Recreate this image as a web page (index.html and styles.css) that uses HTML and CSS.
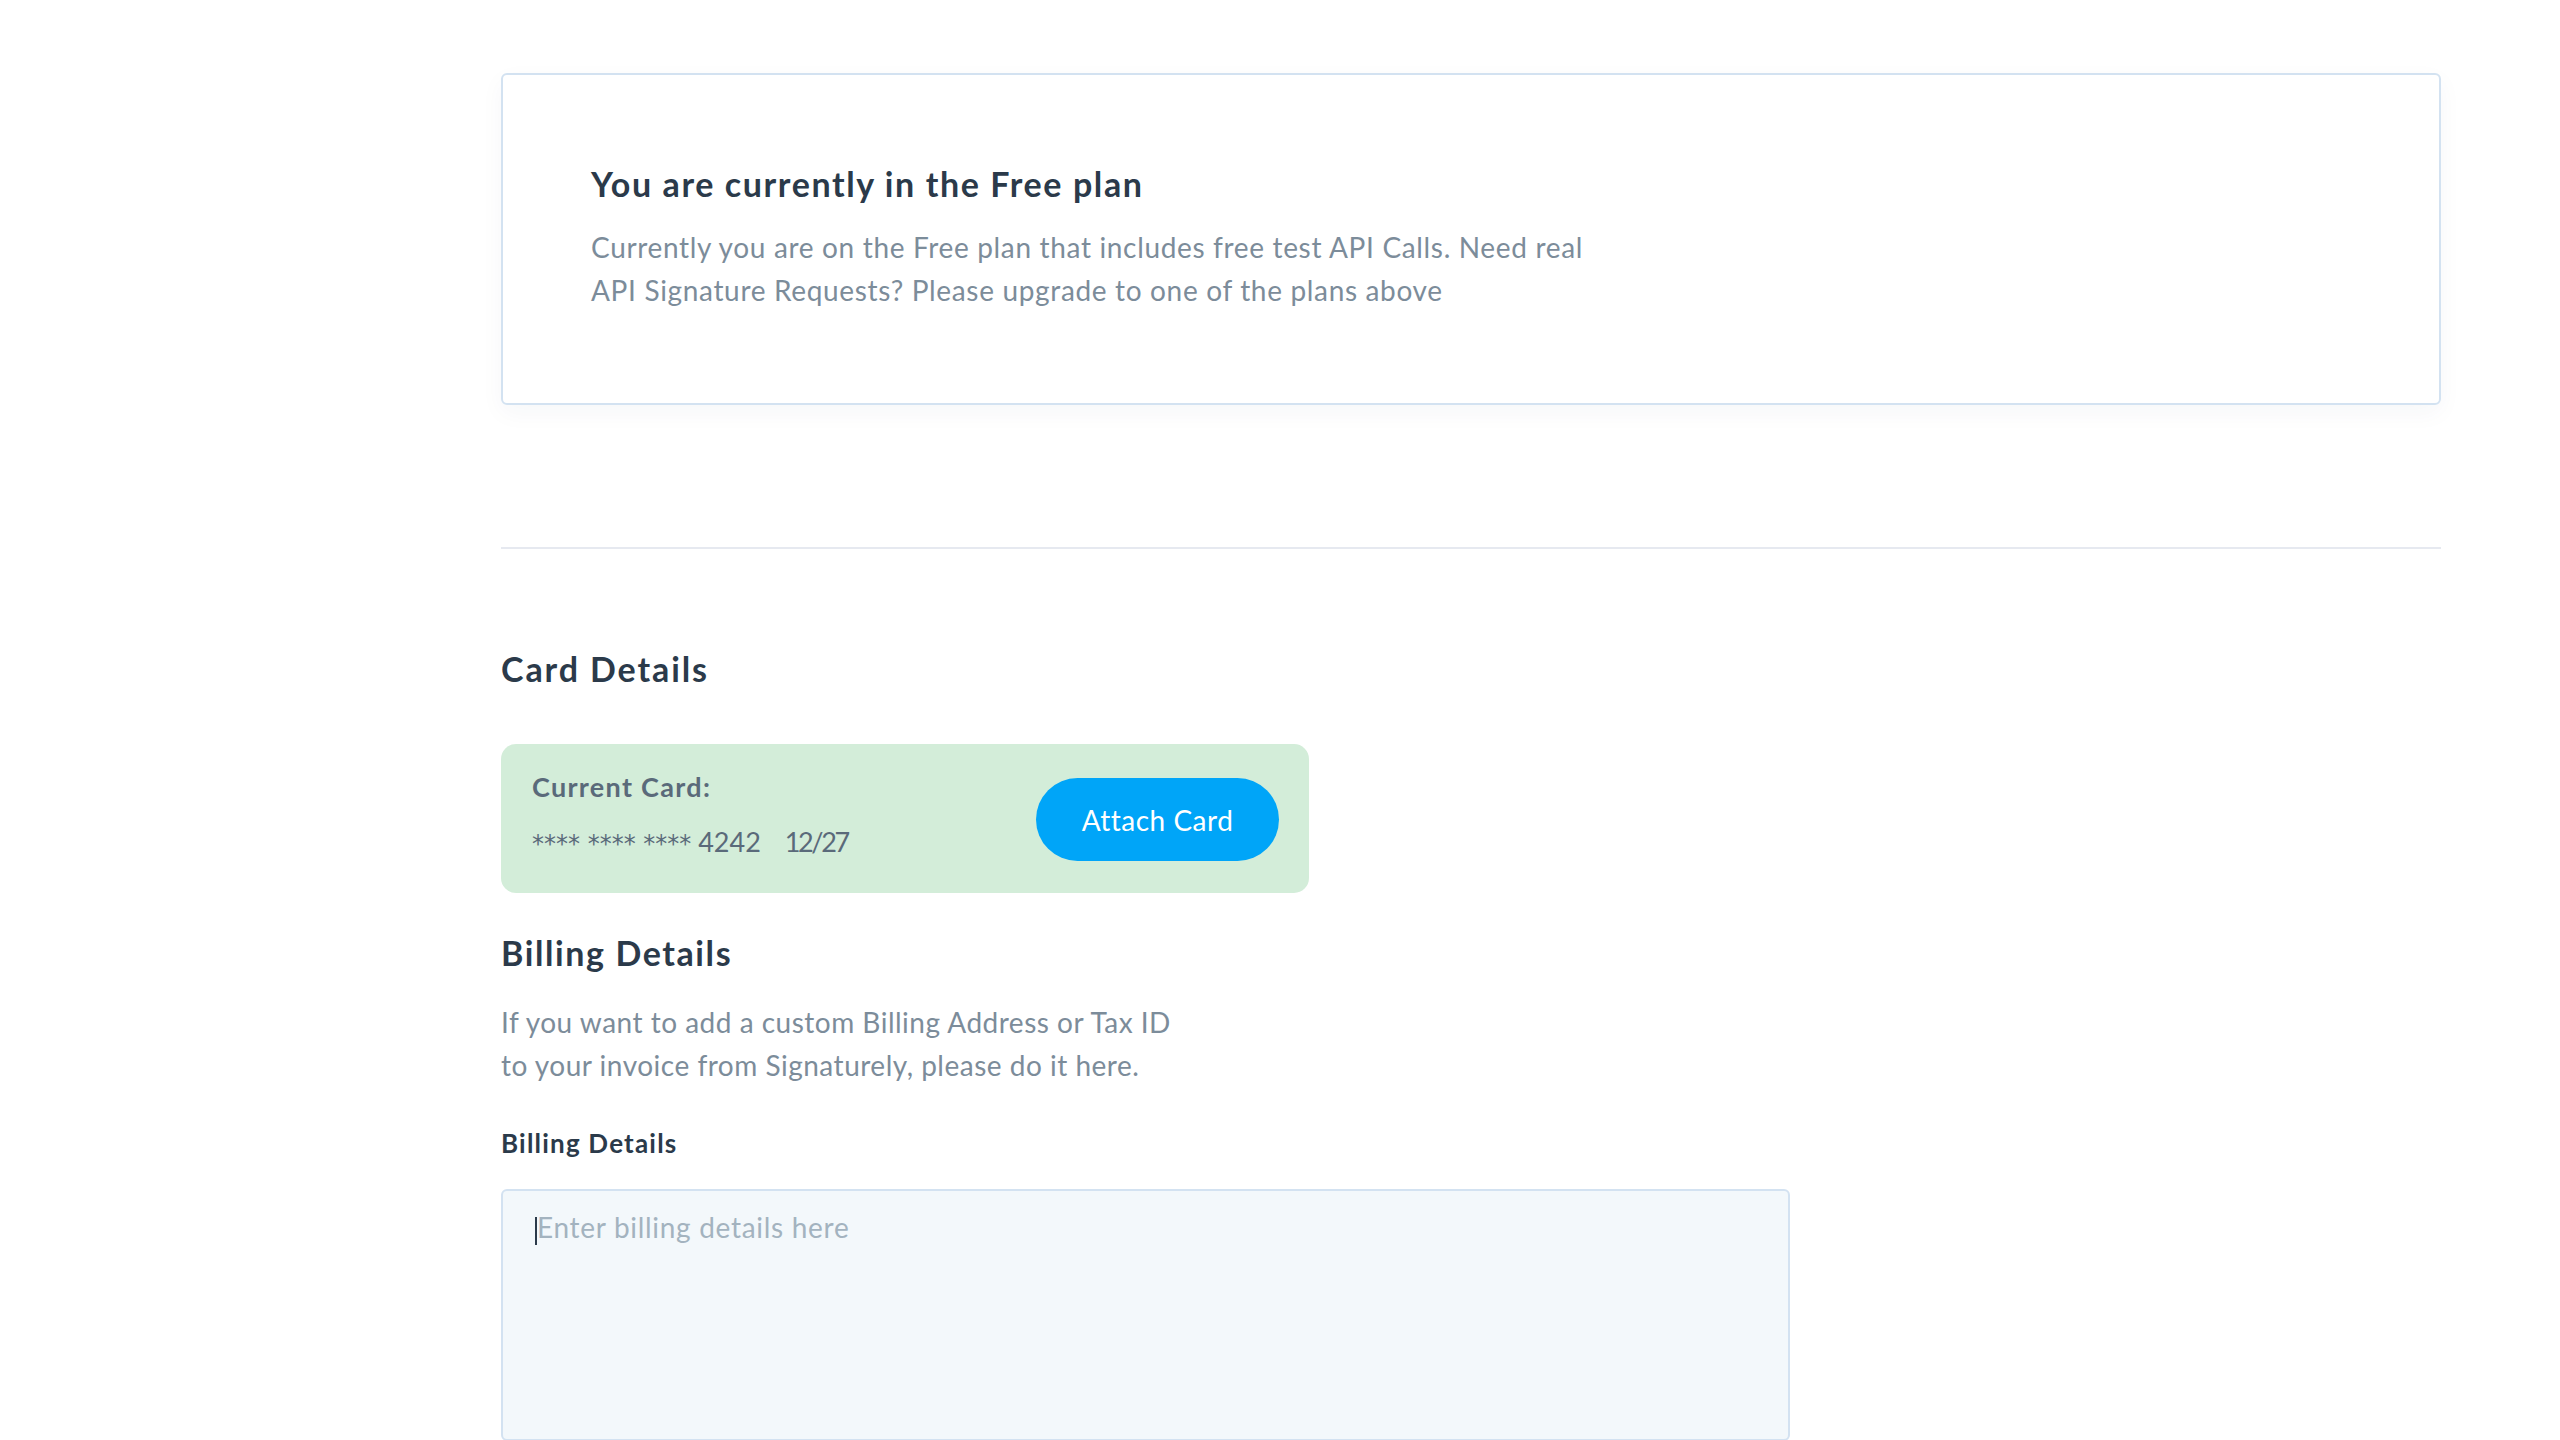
FILE: index.html
```html
<!DOCTYPE html>
<html lang="en">
<head>
<meta charset="utf-8">
<title>Billing</title>
<link rel="stylesheet" href="styles.css">
</head>
<body>
<main class="page">
  <section class="plan-box">
    <h2 class="plan-title">You are currently in the Free plan</h2>
    <p class="plan-text">Currently you are on the Free plan that includes free test API Calls. Need real<br>API Signature Requests? Please upgrade to one of the plans above</p>
  </section>

  <hr class="divider">

  <h2 class="section-title card-title">Card Details</h2>
  <div class="card-panel">
    <div class="card-info">
      <div class="card-label">Current Card:</div>
      <div class="card-number"><span class="stars">**** **** ****</span> 4242<span class="expiry">12/27</span></div>
    </div>
    <button class="attach-btn" type="button">Attach Card</button>
  </div>

  <h2 class="section-title billing-title">Billing Details</h2>
  <p class="billing-text">If you want to add a custom Billing Address or Tax ID<br>to your invoice from Signaturely, please do it here.</p>
  <label class="field-label" for="billing">Billing Details</label>
  <div class="textarea-box" id="billing">
    <span class="caret"></span><span class="placeholder">Enter billing details here</span>
  </div>
</main>
</body>
</html>
```

FILE: styles.css
```css
html, body {
  margin: 0;
  padding: 0;
  background: #ffffff;
}
body {
  font-family: Lato, "Noto Sans", sans-serif;
  color: #2b3a4a;
}
.page {
  padding: 73px 119px 0 501px;
  display: flex;
  flex-direction: column;
  align-items: flex-start;
}
.plan-box {
  align-self: stretch;
  border: 2px solid #d3e2f1;
  border-radius: 6px;
  padding: 87px 88px 91px;
  box-shadow: 0 8px 24px rgba(30, 60, 90, 0.04);
}
.plan-title, .section-title {
  margin: 0;
  font-size: 34px;
  line-height: 44px;
  font-weight: 700;
  letter-spacing: 1.6px;
  color: #2b3a4a;
}
.plan-text {
  margin: 20px 0 0;
  font-size: 28px;
  line-height: 43px;
  letter-spacing: 0.66px;
  color: #7c8c9a;
}
.divider {
  align-self: stretch;
  margin: 142px 0 0;
  border: 0;
  height: 2px;
  background: #e6e9f0;
}
.card-title {
  margin-top: 98px;
  letter-spacing: 1.9px;
}
.card-panel {
  margin-top: 53px;
  width: 808px;
  box-sizing: border-box;
  background: #d3edd9;
  border-radius: 15px;
  padding: 26px 30px 32px 31px;
  display: flex;
  align-items: flex-start;
  justify-content: space-between;
}
.card-info {
  display: flex;
  flex-direction: column;
  color: #5a6a7a;
}
.card-label {
  font-size: 27px;
  line-height: 34px;
  font-weight: 700;
  letter-spacing: 1.3px;
}
.card-number {
  margin-top: 21px;
  font-size: 27px;
  line-height: 34px;
}
.stars {
  font-family: "DejaVu Sans", sans-serif;
  font-size: 24px;
  letter-spacing: 0;
}
.expiry {
  margin-left: 24px;
  letter-spacing: -2.4px;
}
.attach-btn {
  align-self: flex-end;
  width: 243px;
  height: 83px;
  border: 0;
  border-radius: 42px;
  background: #00a5f8;
  color: #ffffff;
  font-family: inherit;
  font-size: 28px;
  letter-spacing: 0.5px;
  padding: 0;
}
.billing-title {
  margin-top: 38px;
}
.billing-text {
  margin: 26px 0 0;
  font-size: 28px;
  line-height: 43px;
  letter-spacing: 0.5px;
  color: #7c8c9a;
}
.field-label {
  margin-top: 39px;
  font-size: 26px;
  line-height: 34px;
  font-weight: 700;
  letter-spacing: 1.2px;
  color: #2b3a4a;
}
.textarea-box {
  margin-top: 29px;
  width: 1289px;
  height: 252px;
  box-sizing: border-box;
  border: 2px solid #d3e2f1;
  border-radius: 6px;
  background: #f3f8fb;
  padding: 15px 32px;
  display: flex;
  align-items: flex-start;
}
.caret {
  width: 2px;
  height: 28px;
  margin-top: 11px;
  background: #2b3a4a;
}
.placeholder {
  font-size: 28px;
  line-height: 43px;
  letter-spacing: 0.7px;
  color: #a3b3bf;
}
```
